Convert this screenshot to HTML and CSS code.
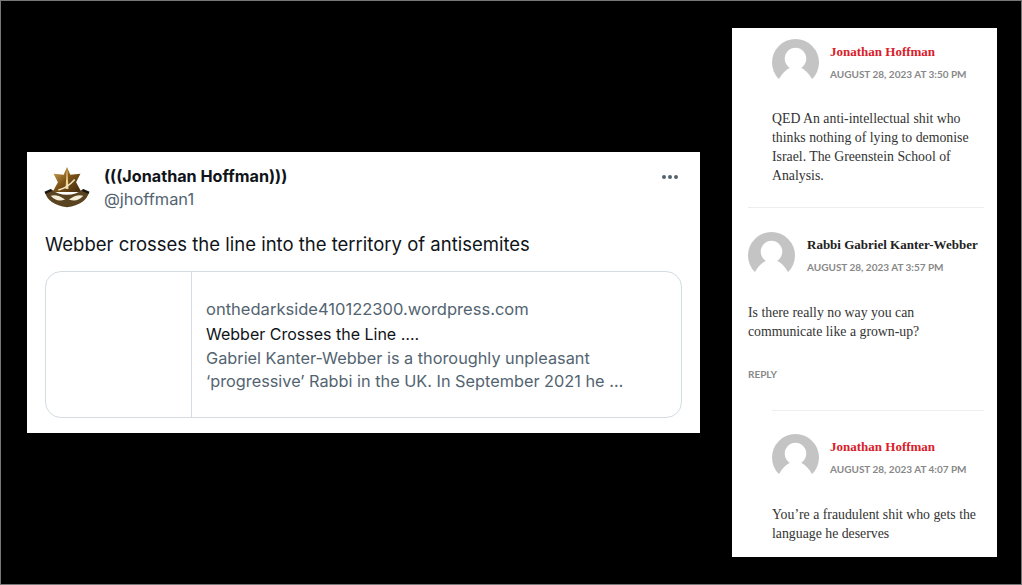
FILE: index.html
```html
<!DOCTYPE html>
<html lang="en">
    <head>
        <meta charset="UTF-8" />
        <meta name="viewport" content="width=device-width, initial-scale=1.0" />
        <title>Webber Crosses the Line</title>

        <link rel="stylesheet" href="styles.css">
    </head>

    <body>
        <div class="stage">
            <div class="tweet">
                <div class="tweet-head">
                    <svg class="badge" viewBox="0 0 48 48">
                        <defs>
                            <linearGradient id="gold" x1="0" y1="0" x2="1" y2="1">
                                <stop offset="0" stop-color="#d8b25e"/>
                                <stop offset="0.5" stop-color="#7d5216"/>
                                <stop offset="1" stop-color="#3f2b10"/>
                            </linearGradient>
                        </defs>
                        <path d="M24 1 L27.5 9 L38 8 L33.5 17 L39 27 L9 27 L14.5 17 L10 8 L20.5 9 Z" fill="url(#gold)"/>
                        <path d="M24 1 L25.6 24 L22.4 24 Z" fill="#f0d48e"/>
                        <path d="M15 25 Q24 23 32 14" stroke="#f4ead0" stroke-width="1.5" fill="none"/>
                        <path d="M1 27 Q4 40 24 43 Q44 40 47 27 L39 25 Q34 30 24 30 Q14 30 9 25 Z" fill="#5a4320"/>
                        <path d="M7 31 Q14 29 22 35 Q13 38 7 31 Z M41 31 Q34 29 26 35 Q35 38 41 31 Z" fill="#f3ecd8"/>
                        <path d="M1 28 L8 25 M47 28 L40 25" stroke="#1b1710" stroke-width="2.6"/>
                    </svg>
                    <div class="names">
                        <div class="display-name">(((Jonathan Hoffman)))</div>
                        <div class="handle">@jhoffman1</div>
                    </div>
                    <div class="dots"><span></span><span></span><span></span></div>
                </div>
                <p class="tweet-text">Webber crosses the line into the territory of antisemites</p>
                <div class="card">
                    <div class="card-thumb"></div>
                    <div class="card-body">
                        <div class="card-site">onthedarkside410122300.wordpress.com</div>
                        <div class="card-title">Webber Crosses the Line ….</div>
                        <div class="card-desc">Gabriel Kanter-Webber is a thoroughly unpleasant<br>‘progressive’ Rabbi in the UK. In September 2021 he …</div>
                    </div>
                </div>
            </div>

            <div class="comments">
                <div class="comment nested first">
                    <div class="comment-head">
                        <svg class="avatar" viewBox="0 0 48 48"><use href="#person"/></svg>
                        <div>
                            <div class="author red">Jonathan Hoffman</div>
                            <div class="date">AUGUST 28, 2023 AT 3:50 PM</div>
                        </div>
                    </div>
                    <p class="comment-text">QED An anti-intellectual shit who thinks nothing of lying to demonise Israel. The Greenstein School of Analysis.</p>
                </div>

                <div class="comment second">
                    <div class="comment-head">
                        <svg class="avatar" viewBox="0 0 48 48"><use href="#person"/></svg>
                        <div>
                            <div class="author">Rabbi Gabriel Kanter-Webber</div>
                            <div class="date">AUGUST 28, 2023 AT 3:57 PM</div>
                        </div>
                    </div>
                    <p class="comment-text">Is there really no way you can communicate like a grown-up?</p>
                    <div class="reply">REPLY</div>
                </div>

                <div class="comment nested third">
                    <div class="comment-head">
                        <svg class="avatar" viewBox="0 0 48 48"><use href="#person"/></svg>
                        <div>
                            <div class="author red">Jonathan Hoffman</div>
                            <div class="date">AUGUST 28, 2023 AT 4:07 PM</div>
                        </div>
                    </div>
                    <p class="comment-text">You’re a fraudulent shit who gets the language he deserves</p>
                </div>
            </div>
        </div>

        <svg class="defs" width="0" height="0">
            <symbol id="person" viewBox="0 0 48 48">
                <circle cx="24" cy="24" r="24" fill="#c4c4c4"/>
                <circle cx="24" cy="20" r="11" fill="#fff"/>
                <path d="M7 41 Q12 32 19 29 Q24 32 29 29 Q36 32 41 41 L48 48 L0 48 Z" fill="#fff"/>
            </symbol>
        </svg>
    </body>
</html>
```

FILE: styles.css
```css
* {
    box-sizing: border-box;
}

body {
    margin: 0;
    background-color: #000;
}

/* thin grey line round the whole picture */
.stage {
    width: 1022px;
    height: 585px;
    border: 1px solid #777;
    display: flex;
    align-items: flex-start;
    padding-left: 26px;
    overflow: hidden;
}

.defs {
    display: block;
    height: 0;
}

/* tweet */
.tweet {
    width: 673px;
    height: 281px;
    margin-top: 151px;
    background-color: #fff;
    padding: 14px 18px 0 18px;
    font-family: Inter, "Liberation Sans", sans-serif;
}
.tweet-head {
    display: flex;
    align-items: flex-start;
}
.badge {
    width: 46px;
    height: 46px;
    flex-shrink: 0;
    margin: 0 14px 0 -1px;
    filter: blur(0.4px);
}
.names {
    flex: 1;
}
.display-name {
    font-size: 16.2px;
    font-weight: 700;
    line-height: 20px;
    color: #0f1419;
}
.handle {
    font-size: 16.4px;
    line-height: 24px;
    margin-top: 1px;
    color: #536471;
}
.dots {
    display: flex;
    gap: 2px;
    margin: 9px 4px 0 0;
}
.dots span {
    width: 4px;
    height: 4px;
    border-radius: 50%;
    background-color: #536471;
}
.tweet-text {
    margin: 20px 0 0 0;
    font-size: 18.5px;
    line-height: 24px;
    color: #0f1419;
}
.card {
    display: flex;
    height: 147px;
    margin-top: 15px;
    border: 1.5px solid #d3dce2;
    border-radius: 16px;
}
.card-thumb {
    width: 146px;
    border-right: 1.5px solid #d3dce2;
}
.card-body {
    padding: 25px 0 0 14px;
    font-size: 16.3px;
    line-height: 24px;
    color: #536471;
}
.card-site {
    font-size: 16.55px;
    line-height: 25px;
}
.card-title {
    font-size: 16px;
    margin-bottom: 1px;
    color: #0f1419;
}
.card-desc {
    line-height: 23px;
}

/* comment column */
.comments {
    width: 265px;
    height: 529px;
    margin: 27px 0 0 32px;
    background-color: #fff;
    padding: 0 13px 0 16px;
    overflow: hidden;
    font-family: "Liberation Serif", serif;
}
.comment-head {
    display: flex;
    gap: 11px;
}
.second .comment-head {
    gap: 12px;
}
.avatar {
    width: 47px;
    height: 47px;
    flex-shrink: 0;
}
.author {
    font-size: 13px;
    font-weight: 700;
    line-height: 16px;
    margin-top: 5px;
    color: #222;
}
.red {
    color: #d9202a;
}
.date {
    font-family: Lato, "Liberation Sans", sans-serif;
    font-size: 10px;
    font-weight: 700;
    line-height: 14px;
    margin-top: 7px;
    color: #888;
}
.comment-text {
    margin: 0;
    font-size: 13.8px;
    line-height: 19px;
    color: #333;
}
.nested {
    padding-left: 24px;
}
.first {
    padding-top: 11px;
    padding-bottom: 22px;
    border-bottom: 1px solid #eee;
}
.first .comment-text {
    margin-top: 23px;
}
.second {
    padding-top: 24px;
    padding-bottom: 29px;
}
.second .comment-text {
    margin-top: 24px;
}
.reply {
    font-family: Lato, "Liberation Sans", sans-serif;
    font-size: 10px;
    font-weight: 700;
    line-height: 14px;
    margin-top: 26px;
    color: #888;
}
.third {
    position: relative;
    padding-top: 24px;
}
.third::before {
    content: "";
    position: absolute;
    top: 0;
    left: 24px;
    right: 0;
    border-top: 1px solid #eee;
}
.third .comment-text {
    margin-top: 24px;
}
```
